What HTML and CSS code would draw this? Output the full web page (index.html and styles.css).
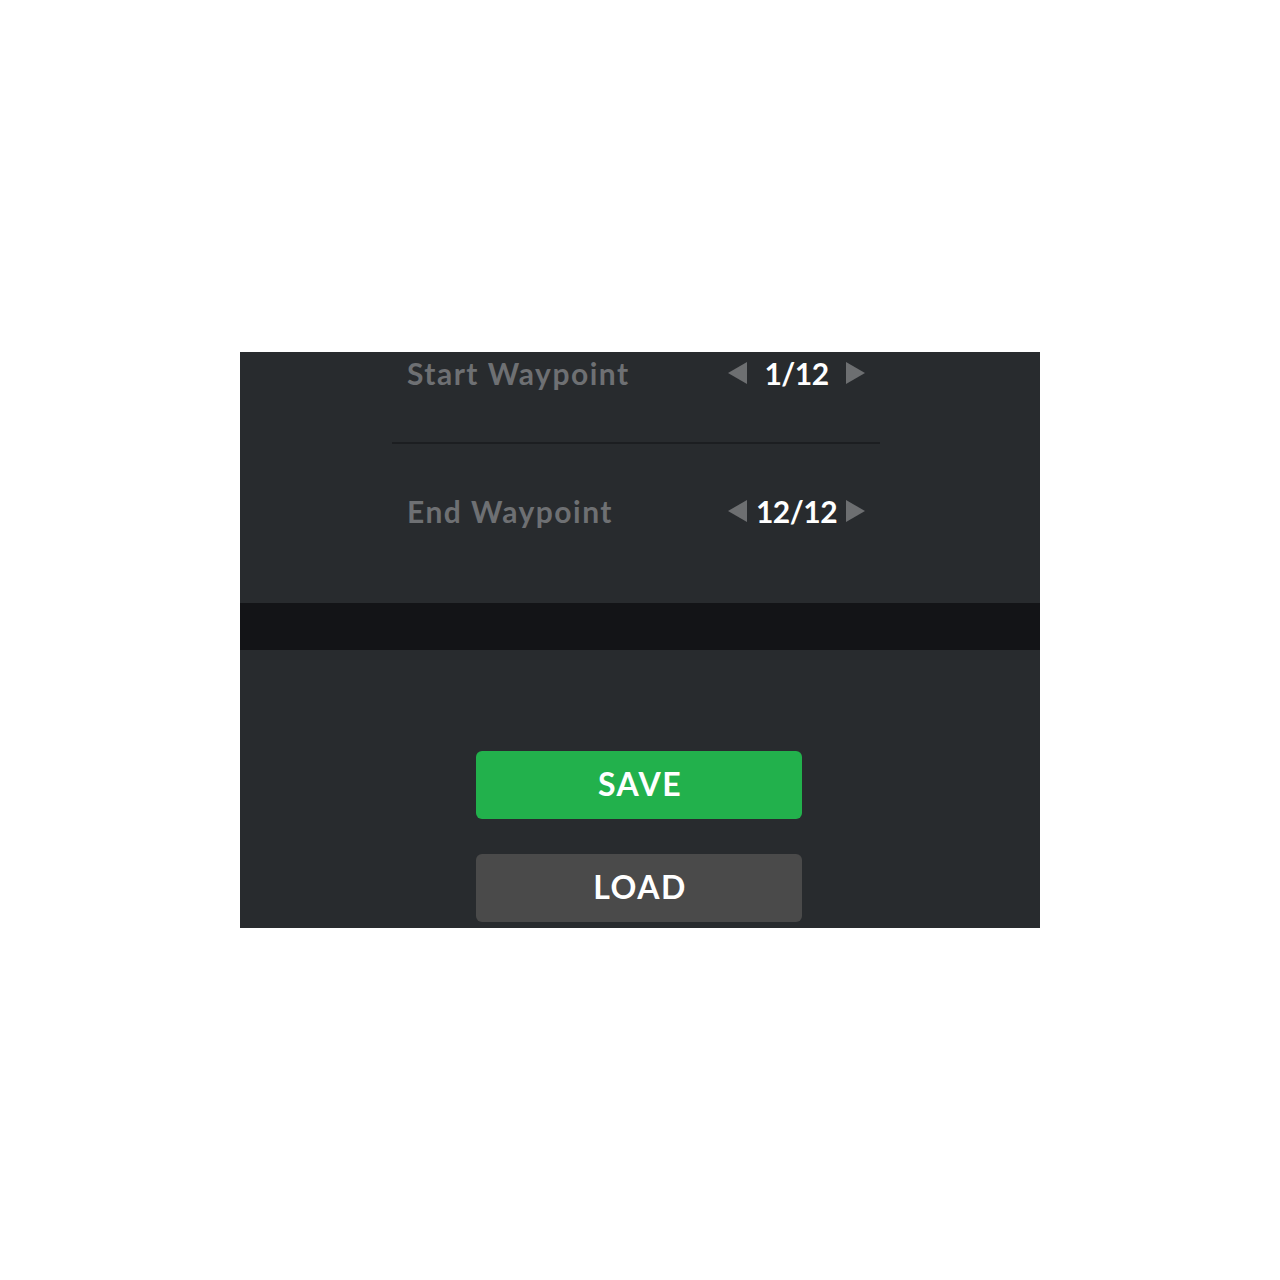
FILE: index.html
```html
<!DOCTYPE html>
<html lang="en">
<head>
    <meta charset="UTF-8">
    <title>Route Settings</title>
    <link rel="stylesheet" href="styles.css">
</head>
<body>
    <div class="panel">
        <div class="waypoints">
            <div class="wp-row first">
                <span class="wp-label">Start Waypoint</span>
                <div class="stepper">
                    <span class="arrow left"></span>
                    <span class="wp-value">1/12</span>
                    <span class="arrow right"></span>
                </div>
            </div>
            <div class="wp-row">
                <span class="wp-label">End Waypoint</span>
                <div class="stepper">
                    <span class="arrow left"></span>
                    <span class="wp-value">12/12</span>
                    <span class="arrow right"></span>
                </div>
            </div>
        </div>
        <div class="band"></div>
        <div class="actions">
            <button class="btn save">SAVE</button>
            <button class="btn load">LOAD</button>
        </div>
    </div>
</body>
</html>
```

FILE: styles.css
```css
/* Page */
body {
    margin: 0;
    background: #ffffff;
    font-family: Lato, "Open Sans", sans-serif;
}

/* Dark panel */
.panel {
    width: 800px;
    height: 576px;
    margin: 352px 0 0 240px;
    background: #282b2e;
    overflow: hidden;
}

/* Waypoint rows */
.waypoints {
    width: 488px;
    margin-left: 152px;
}

.wp-row {
    display: flex;
    align-items: center;
    justify-content: space-between;
    height: 46px;
    padding: 44px 15px 69px 15px;
}

.wp-row.first {
    height: 42px;
    padding-top: 0;
    padding-bottom: 48px;
    border-bottom: 2px solid #1c1e21;
}

.wp-label {
    font-size: 30px;
    font-weight: bold;
    letter-spacing: 1.5px;
    color: #6e7073;
}

.stepper {
    display: flex;
    align-items: center;
    justify-content: space-between;
    width: 137px;
}

.wp-value {
    font-size: 30px;
    font-weight: bold;
    letter-spacing: -0.5px;
    color: #ffffff;
}

.arrow {
    width: 0;
    height: 0;
    border-top: 11px solid transparent;
    border-bottom: 11px solid transparent;
}

.arrow.left {
    border-right: 19px solid #6d6f71;
}

.arrow.right {
    border-left: 19px solid #6d6f71;
}

/* Separator band */
.band {
    height: 47px;
    background: #131417;
}

/* Buttons */
.actions {
    display: flex;
    flex-direction: column;
    align-items: center;
    gap: 35px;
    padding: 101px 2px 0 0;
}

.btn {
    width: 326px;
    height: 68px;
    padding: 0 0 3px 2px;
    border: none;
    border-radius: 6px;
    color: #ffffff;
    font-family: Lato, "Open Sans", sans-serif;
    font-size: 32px;
    font-weight: bold;
    letter-spacing: 1.5px;
    cursor: pointer;
}

.btn.save {
    background: #22b14c;
}

.btn.load {
    background: #4a4a4a;
}
```
